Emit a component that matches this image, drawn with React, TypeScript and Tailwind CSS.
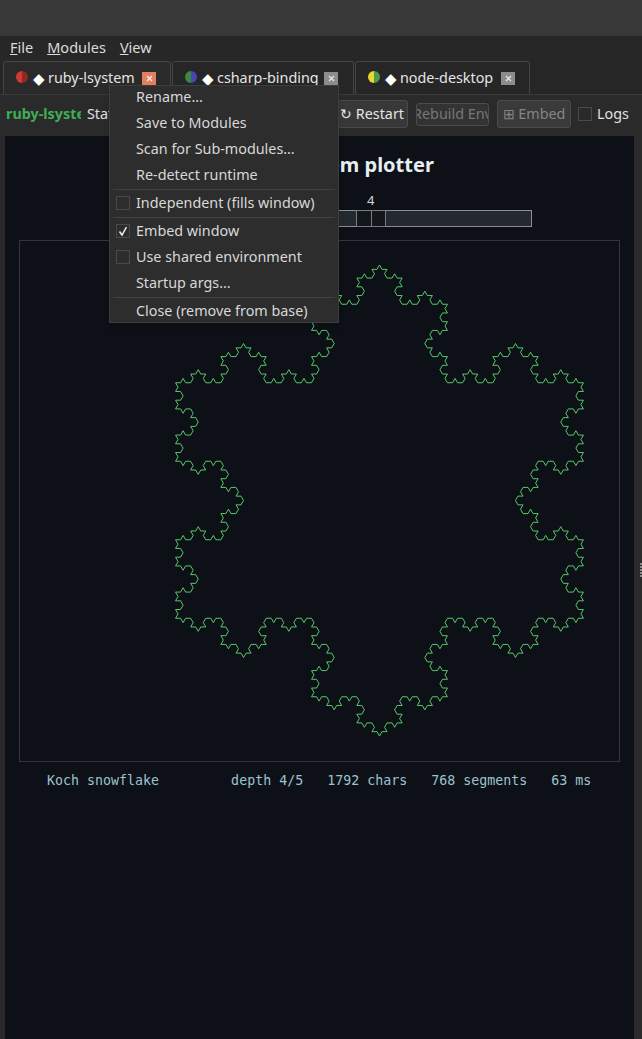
import { useMemo } from "react";

function koch(cx: number, cy: number, r: number, depth: number) {
  let s = "F--F--F";
  for (let i = 0; i < depth; i++) s = s.replace(/F/g, "F+F--F+F");
  const len = (r * Math.sqrt(3)) / 3 ** depth;
  let x = cx;
  let y = cy - r;
  let a = 60;
  const pts: string[] = [`${x.toFixed(2)},${y.toFixed(2)}`];
  for (const c of s) {
    if (c === "F") {
      x += len * Math.cos((a * Math.PI) / 180);
      y += len * Math.sin((a * Math.PI) / 180);
      pts.push(`${x.toFixed(2)},${y.toFixed(2)}`);
    } else if (c === "+") a -= 60;
    else a += 60;
  }
  return pts.join(" ");
}

function Dot({ left, right }: { left: string; right: string }) {
  return (
    <svg width="12" height="12" viewBox="0 0 12 12" className="mb-[2px] shrink-0">
      <path d="M6 0a6 6 0 0 0 0 12z" fill={left} />
      <path d="M6 0a6 6 0 0 1 0 12z" fill={right} />
    </svg>
  );
}

function CloseBox({ active }: { active?: boolean }) {
  return (
    <span className={`flex h-[13px] w-[14px] shrink-0 items-center justify-center ${active ? "bg-[#e0805f]" : "bg-[#8c8c8c]"}`}>
      <svg width="7" height="7" viewBox="0 0 7 7">
        <path d="M1 1l5 5M6 1l-5 5" stroke={active ? "#fbe4dc" : "#e2e2e2"} strokeWidth="1.4" />
      </svg>
    </span>
  );
}

function Tab({ left, right, label, active, width, labelWidth }: { left: string; right: string; label: string; active?: boolean; width: string; labelWidth: string }) {
  return (
    <div className={`flex h-[33px] items-center rounded-t-[3px] border border-b-0 border-[#454545] pl-[12px] ${width} ${active ? "bg-[#2a2a2a]" : "bg-[#262626]"}`}>
      <Dot left={left} right={right} />
      <span className="ml-[5px] text-[15px] leading-none text-white">◆</span>
      <span className={`ml-[3px] whitespace-nowrap text-[14.35px] text-[#e4e4e4] ${labelWidth}`}>{label}</span>
      <span className="ml-[10px]">
        <CloseBox active={active} />
      </span>
    </div>
  );
}

function MenuItem({ label, check }: { label: string; check?: "on" | "off" }) {
  return (
    <div className="flex h-[26px] items-center pl-[6px]">
      <span className="flex h-[14px] w-[14px] shrink-0 items-center justify-center">
        {check && (
          <span className="flex h-[14px] w-[14px] items-center justify-center border border-[#4a4a4a]">
            {check === "on" && (
              <svg width="12" height="12" viewBox="0 0 12 12">
                <path d="M2.5 6.5L5 10L9.5 2" fill="none" stroke="#f2f2f2" strokeWidth="1.5" />
              </svg>
            )}
          </span>
        )}
      </span>
      <span className="ml-[6px] whitespace-nowrap text-[14.35px] text-[#d8d8d8]">{label}</span>
    </div>
  );
}

function Sep() {
  return <div className="mx-[3px] my-[0.5px] h-px bg-[#414141]" />;
}

export default function App() {
  const points = useMemo(() => koch(379.5, 260.5, 235.5, 4), []);
  return (
    <div className="relative flex h-[1039px] w-[642px] flex-col overflow-hidden bg-[#2a2a2a] font-['Noto_Sans',sans-serif] text-[#e0e0e0]">
      <div className="h-[36px] bg-[#383838]" />
      <div className="flex h-[26px] items-center gap-[14px] border-t border-[#262626] bg-[#272727] pb-[3px] pl-[10px] text-[14.5px] text-[#dcdcdc]">
        <span><span className="underline">F</span>ile</span>
        <span><span className="underline">M</span>odules</span>
        <span><span className="underline">V</span>iew</span>
      </div>
      <div className="flex h-[33px] items-end gap-px border-b border-[#3a3a3a] bg-[#262626] pl-[3px]">
        <Tab left="#d03a32" right="#8e2a26" label="ruby-lsystem" active width="w-[168px]" labelWidth="w-[84px]" />
        <Tab left="#3c8a3c" right="#4646b4" label="csharp-binding" width="w-[182px]" labelWidth="w-[97px]" />
        <Tab left="#e6d82e" right="#4f9a4a" label="node-desktop" width="w-[175px]" labelWidth="w-[91px]" />
      </div>
      <div className="flex h-[41px] items-center bg-[#2a2a2a] pb-[3px] pl-[6px]">
        <span className="w-[75px] shrink-0 overflow-hidden whitespace-nowrap pb-[1px] text-[14.35px] font-bold text-[#3fae55]">ruby-lsystem</span>
        <span className="ml-[6px] w-[200px] shrink-0 pb-[1px] text-[14.35px]">Status: running</span>
        <button className="ml-[51px] flex h-[28px] w-[70px] shrink-0 items-center justify-end whitespace-nowrap rounded-[3px] border border-[#4a4a4a] bg-[#383838] pb-[1px] pr-[3px] text-[14.35px] text-[#e4e4e4]">↻ Restart</button>
        <button className="ml-[8px] flex h-[23px] w-[73px] shrink-0 items-center justify-center overflow-hidden whitespace-nowrap rounded-[3px] border border-[#4c4c4c] bg-[#333333] pb-[1px] text-[14.35px] text-[#777777]">Rebuild Env</button>
        <button className="ml-[8px] flex h-[28px] w-[74px] shrink-0 items-center justify-center whitespace-nowrap rounded-[3px] border border-[#4a4a4a] bg-[#3a3a3a] pb-[1px] text-[14.35px] text-[#858585]">⊞ Embed</button>
        <span className="ml-[7px] h-[14px] w-[14px] shrink-0 border border-[#4a4a4a]" />
        <span className="ml-[5px] text-[14.35px] text-[#e0e0e0]">Logs</span>
      </div>
      <div className="ml-[5px] mr-[8px] flex min-h-0 flex-1 flex-col items-center bg-[#0d1117]">
        <div className="ml-[10px] mt-[14px] text-[20px] font-bold leading-[30px] text-[#e6edf3]">Ruby L-system plotter</div>
        <div className="ml-[115px] mt-[10px] flex w-[412px] flex-col self-start">
          <div className="pl-[247px] text-[13px] leading-[20px] text-[#d8d8d8]">4</div>
          <div className="relative h-[17px] w-full border border-[#8a8f94] bg-[#24292f]">
            <div className="absolute left-[235px] top-[-1px] flex h-[17px] w-[30px] border border-[#777c81]">
              <span className="flex-1 bg-[#13171c]" />
              <span className="w-px bg-[#777c81]" />
              <span className="flex-1 bg-[#13171c]" />
            </div>
          </div>
        </div>
        <div className="relative ml-[14px] mt-[13px] h-[522px] w-[601px] self-start border border-[#30363d]">
          <svg width="642" height="522" className="absolute left-[-20px] top-[-1px]" viewBox="0 0 642 522">
            <polyline points={points} fill="none" stroke="#58c868" strokeWidth="1" />
          </svg>
        </div>
        <div className="ml-[42px] mt-[10px] self-start whitespace-pre font-['DejaVu_Sans_Mono',monospace] text-[13.3px] leading-[18px] text-[#9cc2d0]">
          {"Koch snowflake         depth 4/5   1792 chars   768 segments   63 ms"}
        </div>
      </div>
      <div className="absolute left-[109px] top-[85px] h-[238px] w-[230px] overflow-hidden border border-[#3e3e3e] bg-[#2d2d2d] shadow-md">
        <div className="-mt-[2px]">
          <MenuItem label="Rename…" />
          <MenuItem label="Save to Modules" />
          <MenuItem label="Scan for Sub-modules…" />
          <MenuItem label="Re-detect runtime" />
          <Sep />
          <MenuItem label="Independent (fills window)" check="off" />
          <Sep />
          <MenuItem label="Embed window" check="on" />
          <MenuItem label="Use shared environment" check="off" />
          <MenuItem label="Startup args…" />
          <Sep />
          <MenuItem label="Close (remove from base)" />
        </div>
      </div>
      <div className="absolute right-0 top-[563px] flex flex-col gap-px">
        {[0, 1, 2, 3, 4].map((i) => (
          <span key={i} className="h-[2px] w-[2px] bg-[#8a8a8a]" />
        ))}
      </div>
    </div>
  );
}
